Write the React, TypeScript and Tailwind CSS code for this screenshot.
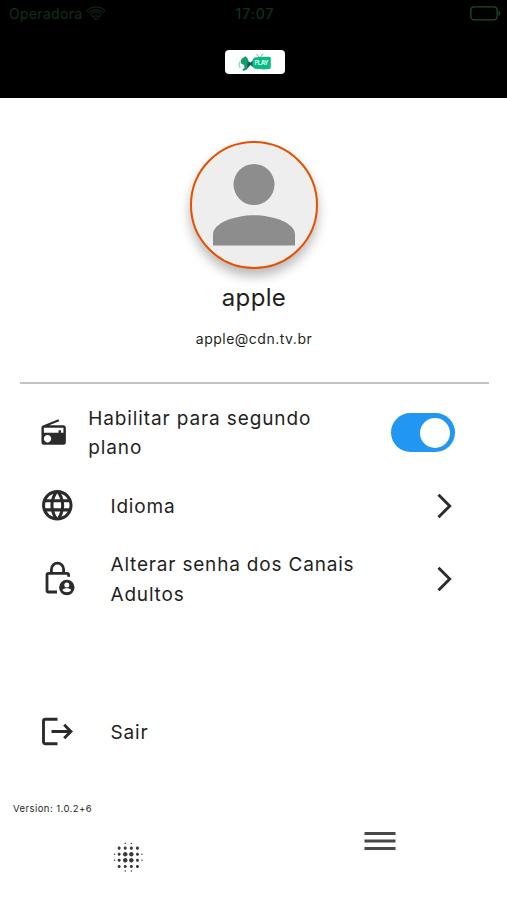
import type { ReactNode } from "react"
import { MdBlurOn, MdLanguage, MdRadio } from "react-icons/md"

function WifiIcon() {
  return (
    <svg width="20" height="15" viewBox="0 0 20 15" fill="none" stroke="#10301a" strokeWidth="1">
      <path d="M1 4.6C6 -0.2 14 -0.2 19 4.6L17.2 6.6C13.2 3 6.8 3 2.8 6.6Z" />
      <path d="M4.6 8.2C7.6 5.2 12.4 5.2 15.4 8.2L10 14Z" />
      <path d="M7.5 10.8C8.8 9.6 11.2 9.6 12.5 10.8" />
    </svg>
  )
}

function BatteryIcon() {
  return (
    <svg width="31" height="15" viewBox="0 0 31 15" fill="none" stroke="#1f4d29">
      <rect x="0.8" y="0.8" width="26.4" height="13" rx="3.5" strokeWidth="1.3" />
      <path d="M28.9 5v4.6c1.4-.6 1.4-4 0-4.6z" fill="#1f4d29" strokeWidth="0.5" />
    </svg>
  )
}

function Logo() {
  return (
    <svg width="60" height="24" viewBox="0 0 60 24">
      <path d="M15.500 11l1.500-2.500 2-1.200 1.500-1 1.500 1.200 1.500 3-.5 2.500 2 1-2.200 2-.8 3.500-3.800 1.500-1-1.200 2.300-2-.5-3-2.500-.8z" fill="#159b70" />
      <path d="M15 11.500l-1 3 1.200 3.500" stroke="#8bdcc0" strokeWidth="1.300" fill="none" />
      <path d="M22.500 11l3 1.500 5-4.500v11l-5-4-3.500 4z" fill="#07674e" />
      <path d="M31.500 4l3.500 4 3-4.500" stroke="#52796d" strokeWidth="0.700" fill="none" />
      <path d="M29.500 7.500c5-1 11-1 15-.7q1.300.2 1.300 1.500v9q0 1.500-1.500 1.800c-4 .6-10 .6-14-.5-4-2-4-9-.8-11.100z" fill="#08bb86" />
      <text x="36.500" y="15" textAnchor="middle" fontFamily="Inter, sans-serif" fontSize="6" fontWeight="700" fill="#d8fff0" textLength="14">PLAY</text>
    </svg>
  )
}

function LockPersonIcon() {
  return (
    <svg width="37" height="37" viewBox="0 0 37 37" fill="none" stroke="#2b2b2b" strokeWidth="2.800">
      <path d="M12.400 13V9.300a6.100 6.100 0 0 1 12.200 0V13" />
      <path d="M18 32H9.600a1.600 1.600 0 0 1-1.600-1.600V15a1.600 1.600 0 0 1 1.600-1.600h18.400a1.600 1.600 0 0 1 1.600 1.600v1.700" />
      <circle cx="27.800" cy="27.500" r="7.700" fill="#2b2b2b" stroke="none" />
      <circle cx="27.800" cy="25" r="2.500" fill="#fff" stroke="none" />
      <path d="M23.400 30c1.300-2.200 7.500-2.200 8.800 0-2 3-6.800 3-8.800 0z" fill="#fff" stroke="none" />
    </svg>
  )
}

function LogoutIcon() {
  return (
    <svg width="37" height="37" viewBox="0 0 37 37" fill="none" stroke="#2b2b2b" strokeWidth="2.900">
      <path d="M18.500 6.300H6.300a1.800 1.800 0 0 0-1.800 1.800v20.800a1.800 1.800 0 0 0 1.800 1.800h12.200" />
      <path d="M12.500 18.500h19.500M25.200 11.800l6.700 6.700-6.700 6.700" />
    </svg>
  )
}

function ChevronIcon() {
  return (
    <svg className="shrink-0" width="18" height="26" viewBox="0 0 18 26" fill="none" stroke="#2b2b2b" strokeWidth="2.900">
      <path d="M2.500 1.800L13.700 13 2.500 24.200" />
    </svg>
  )
}

function MenuRow({ icon, label, chevron = true }: { icon: ReactNode; label: string; chevron?: boolean }) {
  return (
    <button className="flex h-[73px] w-full items-center pr-[53px] pl-[38.500px] text-left">
      <span className="flex w-[72px] shrink-0 items-center">{icon}</span>
      <span className="w-[270px] pt-[2px] text-[19px] leading-[29.300px] tracking-[0.810px]">{label}</span>
      {chevron && (
        <span className="ml-auto">
          <ChevronIcon />
        </span>
      )}
    </button>
  )
}

export default function App() {
  return (
    <div className="flex h-[900px] w-[507px] flex-col bg-white font-['Inter',sans-serif] text-[#1f1f1f]">
      {/* Status bar and logo */}
      <header className="h-[98px] shrink-0 bg-black">
        <div className="grid h-[28px] grid-cols-3 items-center pr-[6px] pl-[9px] text-[14px] text-[#10301a]">
          <div className="flex items-center gap-[4px] pb-[2px]">
            <span className="tracking-[0.300px]">Operadora</span>
            <WifiIcon />
          </div>
          <span className="pb-[2px] text-center font-medium tracking-[0.900px]">17:07</span>
          <div className="flex justify-end pb-[2px]">
            <BatteryIcon />
          </div>
        </div>
        <div className="mt-[22px] ml-[225px] h-[24px] w-[60px] overflow-hidden rounded-[4px] bg-white">
          <Logo />
        </div>
      </header>

      {/* Profile */}
      <section className="flex h-[284px] shrink-0 flex-col items-center pt-[43px]">
        <div className="h-[128px] w-[128px] overflow-hidden rounded-full border-2 border-[#e65100] bg-[#eee] shadow-[0_7px_12px_rgba(0,0,0,0.28)]">
          <svg width="124" height="124" viewBox="0 0 124 124" fill="#8d8d8d">
            <circle cx="62" cy="41.500" r="20.500" />
            <path d="M21 102.500V91.500C21 80 43 72.300 62 72.300S103 80 103 91.500v11z" />
          </svg>
        </div>
        <h1 className="mt-[12px] pl-[1px] text-[24px] leading-[34px] tracking-[0.350px]">apple</h1>
        <p className="mt-[14px] pl-[1px] text-[14px] leading-[20px] tracking-[0.500px]">apple@cdn.tv.br</p>
      </section>

      <div className="mr-[18px] ml-[20px] h-[2px] shrink-0 bg-[#c2c2c2]" />

      {/* Settings */}
      <div className="flex h-[85px] shrink-0 items-center pt-[12px] pr-[52.500px] pl-[39px]">
        <MdRadio size={29.3} color="#2b2b2b" className="shrink-0" />
        <span className="ml-[20px] w-[240px] pt-[1px] text-[19px] leading-[29.300px] tracking-[0.880px]">
          Habilitar para segundo plano
        </span>
        <button
          role="switch"
          aria-checked="true"
          aria-label="Habilitar para segundo plano"
          className="ml-auto flex h-[39px] w-[64px] shrink-0 items-center justify-end rounded-full bg-[#2196f3] pr-[4.500px]"
        >
          <span className="h-[30px] w-[30px] rounded-full bg-white" />
        </button>
      </div>
      <MenuRow icon={<MdLanguage size={36.6} color="#2b2b2b" />} label="Idioma" />
      <MenuRow icon={<LockPersonIcon />} label="Alterar senha dos Canais Adultos" />
      <div className="mt-[80px]">
        <MenuRow icon={<LogoutIcon />} label="Sair" chevron={false} />
      </div>

      <p className="mt-[33px] ml-[13px] text-[9.500px] leading-[16px] tracking-[0.440px]">Version: 1.0.2+6</p>

      {/* Bottom tabs */}
      <nav className="grid grid-cols-2 items-start pt-[13px]">
        <button className="flex justify-center pt-[9px] pl-[3px]">
          <MdBlurOn size={36.6} color="#3a3a3a" />
        </button>
        <button className="flex justify-center pt-[1px]">
          <svg width="32" height="20" viewBox="0 0 32 20" stroke="#484848" strokeWidth="2.800">
            <path d="M0.500 2.500h31M0.500 10h31M0.500 17.500h31" />
          </svg>
        </button>
      </nav>
    </div>
  )
}
